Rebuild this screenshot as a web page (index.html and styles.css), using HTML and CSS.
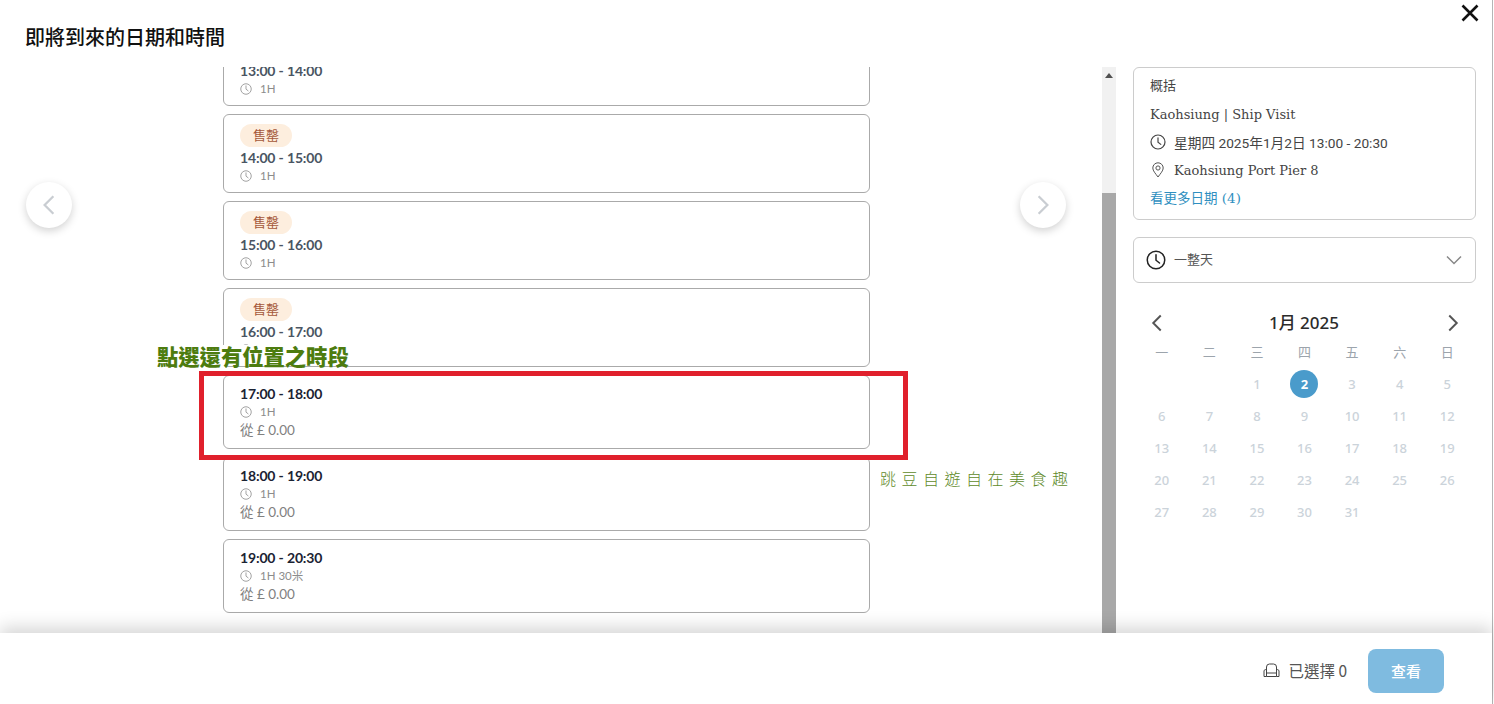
FILE: index.html
```html
<!DOCTYPE html>
<html lang="zh-Hant">
<head>
<meta charset="UTF-8" />
<title>即將到來的日期和時間</title>
<link rel="stylesheet" href="styles.css">
</head>
<body>
<svg class="defs" width="0" height="0">
  <symbol id="clock" viewBox="0 0 16 16">
    <circle cx="8" cy="8" r="7" fill="none" stroke="currentColor" stroke-width="1.2"/>
    <path d="M8 3.8V8.2L10.8 10.4" fill="none" stroke="currentColor" stroke-width="1.2" stroke-linecap="round"/>
  </symbol>
  <symbol id="chev-left" viewBox="0 0 16 24">
    <path d="M13 2L3 12L13 22" fill="none" stroke="currentColor" stroke-width="2.600"/>
  </symbol>
  <symbol id="chev-right" viewBox="0 0 16 24">
    <path d="M3 2L13 12L3 22" fill="none" stroke="currentColor" stroke-width="2.600"/>
  </symbol>
</svg>

<div class="modal">
  <header class="modal-head">
    <h1 class="modal-title">即將到來的日期和時間</h1>
    <svg class="close-icon" width="18" height="18" viewBox="0 0 18 18"><path d="M1.5 1.5L16.5 16.5M16.5 1.5L1.5 16.5" stroke="#111" stroke-width="2.6"/></svg>
  </header>

  <div class="modal-body">
    <div class="slots-pane">
      <div class="slots">
        <div class="slot sold"><span class="badge">售罄</span><div class="slot-time">13:00 - 14:00</div><div class="slot-dur"><svg class="dur-icon"><use href="#clock"/></svg>1H</div></div>
        <div class="slot sold"><span class="badge">售罄</span><div class="slot-time">14:00 - 15:00</div><div class="slot-dur"><svg class="dur-icon"><use href="#clock"/></svg>1H</div></div>
        <div class="slot sold"><span class="badge">售罄</span><div class="slot-time">15:00 - 16:00</div><div class="slot-dur"><svg class="dur-icon"><use href="#clock"/></svg>1H</div></div>
        <div class="slot sold"><span class="badge">售罄</span><div class="slot-time">16:00 - 17:00</div><div class="slot-dur"><svg class="dur-icon"><use href="#clock"/></svg>1H</div></div>
        <div class="slot"><div class="slot-time">17:00 - 18:00</div><div class="slot-dur"><svg class="dur-icon"><use href="#clock"/></svg>1H</div><div class="slot-price">從 £ 0.00</div></div>
        <div class="slot"><div class="slot-time">18:00 - 19:00</div><div class="slot-dur"><svg class="dur-icon"><use href="#clock"/></svg>1H</div><div class="slot-price">從 £ 0.00</div></div>
        <div class="slot"><div class="slot-time">19:00 - 20:30</div><div class="slot-dur"><svg class="dur-icon"><use href="#clock"/></svg>1H 30米</div><div class="slot-price">從 £ 0.00</div></div>
      </div>
    </div>

    <div class="scrollbar">
      <div class="scroll-up"></div>
      <div class="scroll-thumb"></div>
    </div>

    <aside class="side">
      <section class="summary">
        <div class="sum-row sum-label">概括</div>
        <div class="sum-row">Kaohsiung | Ship Visit</div>
        <div class="sum-row sum-when"><svg class="sum-icon"><use href="#clock"/></svg>星期四 2025年1月2日 13:00 - 20:30</div>
        <div class="sum-row"><svg class="sum-icon" viewBox="0 0 16 16"><path d="M8 15C5.5 11.5 2.8 8.8 2.8 6A5.2 5.2 0 0 1 13.2 6C13.2 8.8 10.5 11.5 8 15Z" fill="none" stroke="#555" stroke-width="1"/><circle cx="8" cy="6" r="2.1" fill="none" stroke="#555" stroke-width="1"/></svg>Kaohsiung Port Pier 8</div>
        <div class="sum-row sum-link">看更多日期 (4)</div>
      </section>

      <div class="time-select">
        <svg class="select-clock"><use href="#clock"/></svg>
        <span class="select-text">一整天</span>
        <svg class="select-chev" width="16" height="10" viewBox="0 0 16 10"><path d="M1 1.5L8 8.5L15 1.5" fill="none" stroke="#888" stroke-width="1.5"/></svg>
      </div>

      <section class="calendar">
        <div class="cal-head">
          <svg class="cal-chev"><use href="#chev-left"/></svg>
          <span class="cal-title">1月 2025</span>
          <svg class="cal-chev"><use href="#chev-right"/></svg>
        </div>
        <div class="cal-grid">
          <span class="wd">一</span><span class="wd">二</span><span class="wd">三</span><span class="wd">四</span><span class="wd">五</span><span class="wd">六</span><span class="wd">日</span>
          <span></span><span></span><span>1</span><span><b class="today">2</b></span><span>3</span><span>4</span><span>5</span>
          <span>6</span><span>7</span><span>8</span><span>9</span><span>10</span><span>11</span><span>12</span>
          <span>13</span><span>14</span><span>15</span><span>16</span><span>17</span><span>18</span><span>19</span>
          <span>20</span><span>21</span><span>22</span><span>23</span><span>24</span><span>25</span><span>26</span>
          <span>27</span><span>28</span><span>29</span><span>30</span><span>31</span>
        </div>
      </section>
    </aside>
  </div>

  <footer class="modal-foot">
    <svg class="seat-icon" width="17" height="15" viewBox="0 0 17 15"><path d="M3.500 7V4A3 3 0 0 1 6.500 1H10.500A3 3 0 0 1 13.500 4V7M3.500 10H13.500M3.500 7A1.500 1.500 0 0 0 1 8V13.500H3.500V7M13.500 7A1.500 1.500 0 0 1 16 8V13.500H13.500V7M3.500 13.500H13.500" fill="none" stroke="#444" stroke-width="1"/></svg>
    <span class="seat-count">已選擇 0</span>
    <button class="view-btn">查看</button>
  </footer>

  <button class="nav nav-prev"><svg class="nav-chev"><use href="#chev-left"/></svg></button>
  <button class="nav nav-next"><svg class="nav-chev"><use href="#chev-right"/></svg></button>

  <!-- annotations drawn over the screenshot -->
  <div class="mark-box"></div>
  <div class="mark-text">點選還有位置之時段</div>
  <div class="watermark">跳豆自遊自在美食趣</div>
</div>
</body>
</html>
```

FILE: styles.css
```css
* { box-sizing: border-box; margin: 0; padding: 0; }
html, body { height: 100%; overflow: hidden; background: #fff; }
body { font-family: Lato, "Noto Sans CJK TC", sans-serif; color: #333; }
.defs { position: absolute; }

.modal {
  position: relative; width: 1493px; height: 704px;
  display: flex; flex-direction: column;
  border-right: 1px solid #b5b5b5; background: #fff;
}

/* Header */
.modal-head { height: 67px; flex: none; padding: 25px 0 0 25px; }
.modal-title { font-family: "Noto Sans CJK TC", sans-serif; font-size: 20px; line-height: 23px; font-weight: 500; color: #111; }
.close-icon { position: absolute; top: 4px; right: 13px; }

/* Body */
.modal-body { flex: 1; display: flex; min-height: 0; }
.slots-pane { flex: 1; overflow: hidden; }
.slots { margin: -40px 0 0 223px; width: 647px; display: flex; flex-direction: column; gap: 8px; }
.slot { border: 1px solid #aaa; border-radius: 6px; padding: 9px 16px; background: #fff; }
.slot.sold { padding-bottom: 7px; }
.badge {
  display: block; width: 52px; height: 23px; border-radius: 12px; margin-bottom: 2px;
  background: #fdeede; color: #a5583a;
  font-size: 13px; line-height: 23px; text-align: center;
}
.slot-time { font-size: 14px; line-height: 18px; font-weight: 700; letter-spacing: -.15px; color: #1b2333; }
.sold .slot-time { color: #4a5563; }
.slot-dur { display: flex; align-items: center; font-size: 11.500px; line-height: 18px; color: #8c8c8c; }
.dur-icon { width: 12px; height: 12px; margin-right: 8px; color: #999; }
.slot-price { font-size: 13.500px; line-height: 18px; color: #808080; }

/* Scrollbar */
.scrollbar { width: 14px; flex: none; background: #f1f1f1; display: flex; flex-direction: column; }
.scroll-up { height: 126px; position: relative; }
.scroll-up::before {
  content: ""; position: absolute; top: 6px; left: 3px;
  border: 4px solid transparent; border-top: 0; border-bottom: 5px solid #505050;
}
.scroll-thumb { flex: 1; background: #a8a8a8; }

/* Right panel */
.side { width: 376px; flex: none; padding: 0 16px 0 17px; }
.summary { border: 1px solid #ccc; border-radius: 6px; padding: 4px 16px 7px; height: 153px; }
.sum-row {
  display: flex; align-items: center; height: 28px;
  font-family: "DejaVu Serif", "Noto Sans CJK TC", serif; font-size: 13px; color: #444;
}
.sum-label { font-family: "Noto Sans CJK TC", sans-serif; padding-bottom: 3px; }
.sum-when { font-family: Roboto, "Noto Sans CJK TC", sans-serif; font-size: 13.700px; }
.sum-link { font-size: 13.500px; color: #2f8fc0; padding-bottom: 3px; }
.sum-icon { width: 16px; height: 16px; margin-right: 8px; color: #444; flex: none; }

.time-select {
  margin-top: 17px; height: 46px; border: 1px solid #ccc; border-radius: 6px;
  display: flex; align-items: center; padding: 0 13px 0 12px;
}
.select-clock { width: 20px; height: 20px; color: #222; margin-right: 8px; }
.select-text { flex: 1; font-family: "Noto Sans CJK TC", sans-serif; font-size: 13px; color: #555; padding-bottom: 3px; }

.calendar { margin: 27px 5px 0; }
.cal-head { display: flex; align-items: center; justify-content: space-between; height: 26px; padding: 0 12px 0 13px; }
.cal-chev { width: 12px; height: 18px; color: #555; }
.cal-title { font-family: "Noto Sans", "Noto Sans CJK TC", sans-serif; font-size: 17px; font-weight: 500; color: #2b2b2b; padding: 0 2px 4px 0; }
.cal-grid { display: grid; grid-template-columns: repeat(7, 1fr); grid-auto-rows: 32px; }
.cal-grid span {
  display: flex; align-items: center; justify-content: center;
  font-family: "Noto Sans", sans-serif; font-size: 13px; font-weight: 500; color: #cbd3da;
}
.cal-grid .wd { font-family: "Noto Sans CJK TC", sans-serif; font-weight: 400; color: #9ca4ac; padding-bottom: 2px; }
.today {
  width: 28px; height: 28px; border-radius: 50%;
  background: #4a9bcb; color: #fff; font-weight: 700;
  display: flex; align-items: center; justify-content: center;
}

/* Footer */
.modal-foot {
  flex: none; height: 71px; position: relative; background: #fff;
  display: flex; align-items: center; justify-content: flex-end;
  padding: 4px 48px 0 0; box-shadow: 0 -6px 16px rgba(0,0,0,.16);
}
.seat-icon { margin-right: 8px; }
.seat-count { font-family: "Noto Sans CJK TC", sans-serif; font-size: 15.500px; color: #555; margin-right: 21px; padding-bottom: 2px; }
.view-btn {
  width: 76px; height: 44px; border: 0; border-radius: 8px;
  background: #7fbbe0; color: #fff;
  font-family: "Noto Sans CJK TC", sans-serif; font-size: 15px; font-weight: 500;
}

/* Round arrows over the list */
.nav {
  position: absolute; top: 182px; width: 46px; height: 46px;
  border: 0; border-radius: 50%; background: #fff;
  box-shadow: 0 3px 8px rgba(0,0,0,.18);
  display: flex; align-items: center; justify-content: center;
}
.nav-prev { left: 26px; }
.nav-next { left: 1020px; }
.nav-chev { width: 14px; height: 26px; color: #c9cdd2; }

/* Annotations */
.mark-box { position: absolute; left: 199px; top: 371px; width: 709px; height: 89px; border: 5px solid #e0202c; }
.mark-text {
  position: absolute; left: 157px; top: 345px; height: 21px; white-space: nowrap; background: #fff;
  font-family: "Noto Sans CJK TC", sans-serif; font-size: 21.300px; line-height: 21px; font-weight: 900; color: #4d7c0f;
}
.watermark {
  position: absolute; left: 880px; top: 467px; white-space: nowrap;
  font-family: "Noto Sans CJK TC", sans-serif; font-size: 16px; line-height: 22px; font-weight: 300;
  letter-spacing: 5.500px; color: #5e8a2a;
}
```
